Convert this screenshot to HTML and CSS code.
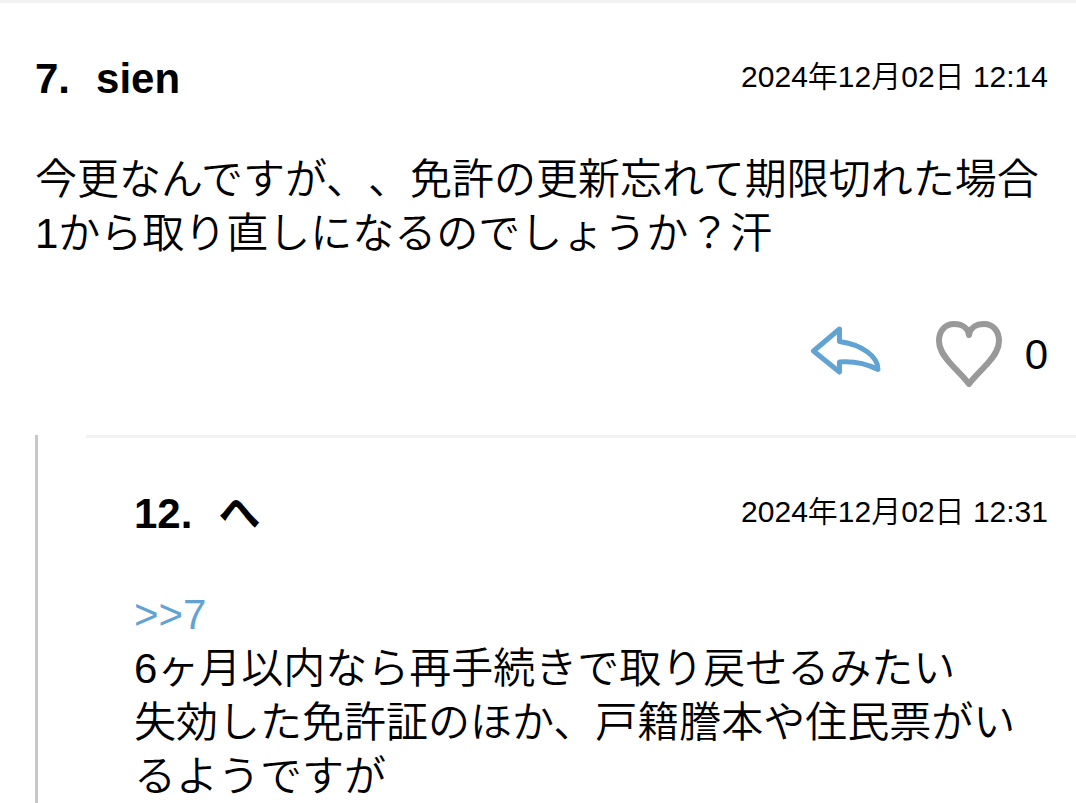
FILE: index.html
```html
<!DOCTYPE html>
<html lang="ja">
<head>
  <meta charset="UTF-8">
  <meta name="viewport" content="width=device-width, initial-scale=1.0">
  <title>コメント</title>
  <link rel="stylesheet" href="styles.css">
</head>
<body>

<main class="comments">
  <article class="comment" id="c7">
    <header class="comment-header">
      <h2 class="comment-name"><span>7.</span><span>sien</span></h2>
      <time class="comment-date" datetime="2024-12-02T12:14">2024年12月02日 12:14</time>
    </header>
    <p class="comment-body">今更なんですが、、免許の更新忘れて期限切れた場合<br>1から取り直しになるのでしょうか？汗</p>
    <footer class="comment-actions">
      <button class="reply-btn" type="button" aria-label="返信">
        <svg width="70" height="52" viewBox="0 0 70 52">
          <path d="M28.500 3 L2.500 25 L28.500 46 V36 C42 35 53 36.500 67 43.500 C67 30 50 18.500 28.500 15.500 Z"/>
        </svg>
      </button>
      <button class="like-btn" type="button" aria-label="いいね">
        <svg width="68" height="68" viewBox="0 0 68 68">
          <path d="M34 63 C30 57 23 51 15 42 C8 34 4 28 4 20 C4 10 10 3 19 3 C27 3 33 7 34 14 C35 7 41 3 49 3 C58 3 64 10 64 20 C64 28 60 34 53 42 C45 51 38 57 34 63 Z"/>
        </svg>
        <span class="like-count">0</span>
      </button>
    </footer>
  </article>

  <!-- Replies -->
  <section class="replies">
    <article class="comment reply" id="c12">
      <header class="comment-header">
        <h2 class="comment-name"><span>12.</span><span>へ</span></h2>
        <time class="comment-date" datetime="2024-12-02T12:31">2024年12月02日 12:31</time>
      </header>
      <p class="comment-body"><a class="anchor" href="#c7">&gt;&gt;7</a><br>6ヶ月以内なら再手続きで取り戻せるみたい<br>失効した免許証のほか、戸籍謄本や住民票がいるようですが</p>
    </article>
  </section>
</main>

</body>
</html>
```
FILE: styles.css
```css
body {
  margin: 0;
  background-color: #fff;
  color: #000;
  font-family: "Liberation Sans", "Noto Sans CJK JP", sans-serif;
  font-size: 42px;
  font-weight: 350;
  line-height: 54px;
  text-spacing-trim: space-all; /* Keep full-width punctuation */
}

.comment {
  border-top: 3px solid #f2f2f2;
  padding: 49px 28px 46px 35px;
}

.comment-header {
  display: flex;
  justify-content: space-between;
  align-items: center;
}

.comment-name {
  display: flex;
  gap: 26px;
  margin: 0;
  font-size: 42px;
  font-weight: bold;
}

.comment-date {
  font-size: 30px;
  line-height: 50px;
  padding-bottom: 4px;
}

.comment-body {
  margin: 47px 0 0;
}

.comment-actions {
  display: flex;
  justify-content: flex-end;
  align-items: center;
  gap: 54px;
  margin-top: 60px;
}

button {
  display: flex;
  align-items: center;
  border: none;
  background: none;
  padding: 0;
  color: inherit;
  font: inherit;
  cursor: pointer;
}

button svg {
  display: block;
  fill: none;
  stroke-linejoin: round;
}

.reply-btn {
  padding-bottom: 6px;
}

.reply-btn svg {
  stroke: #61a3d3;
  stroke-width: 5;
}

.like-btn {
  gap: 22px;
}

.like-btn svg {
  stroke: #999;
  stroke-width: 6;
}

.replies {
  margin-left: 35px;
  border-left: 3px solid #c8c8c8;
  padding-left: 48px;
}

.reply {
  padding-bottom: 0;
  padding-left: 48px;
}

.anchor {
  color: #61a3d3;
  text-decoration: none;
}
```
